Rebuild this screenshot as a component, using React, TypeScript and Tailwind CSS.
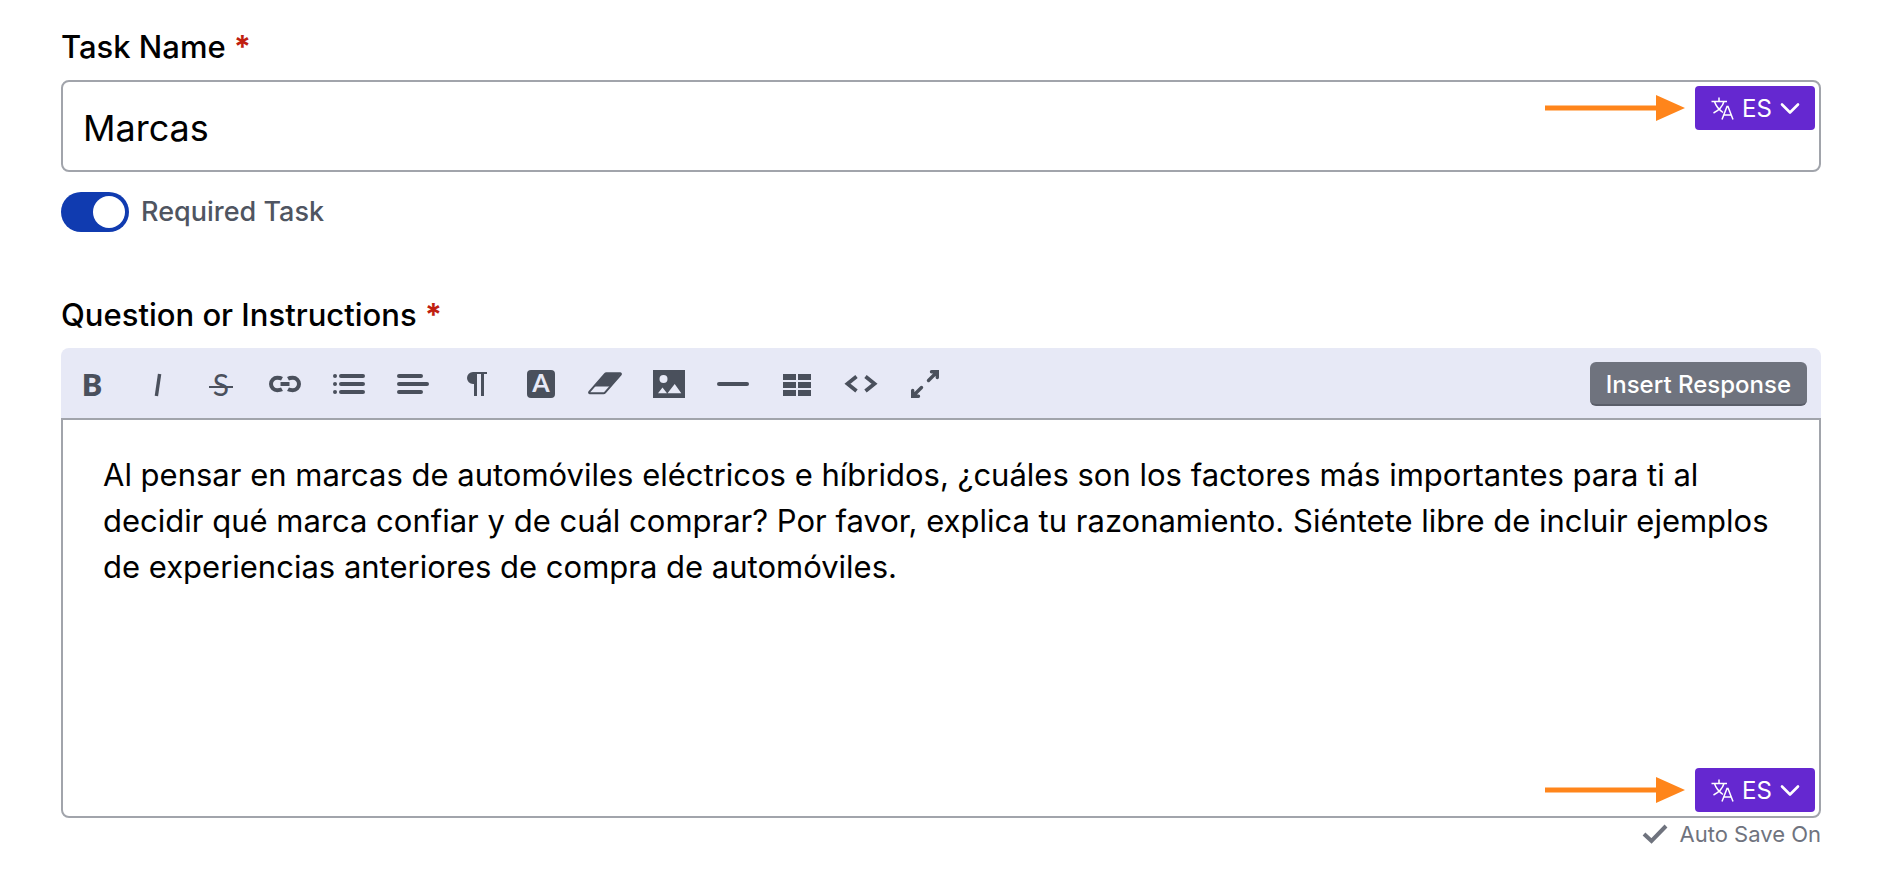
import React, { useState } from "react";

const BODY_TEXT =
  "Al pensar en marcas de automóviles eléctricos e híbridos, ¿cuáles son los factores más importantes para ti al decidir qué marca confiar y de cuál comprar? Por favor, explica tu razonamiento. Siéntete libre de incluir ejemplos de experiencias anteriores de compra de automóviles.";

const TOOLS: { name: string; icon: React.ReactNode }[] = [
  {
    name: "Bold",
    icon: (
      <text x="15" y="28" textAnchor="middle" fill="currentColor" stroke="none" className="font-['Lato'] text-[30px] font-extrabold">
        B
      </text>
    ),
  },
  { name: "Italic", icon: <path d="M18.6 6 15.4 28" strokeWidth="3.4" /> },
  {
    name: "Strikethrough",
    icon: (
      <>
        <text x="16" y="28" textAnchor="middle" fill="currentColor" stroke="none" className="font-['Lato'] text-[30px]">
          S
        </text>
        <path d="M4 19h24" strokeWidth="2" />
      </>
    ),
  },
  {
    name: "Link",
    icon: (
      <g strokeWidth="4">
        <path d="M13 10.7c-1.5-.8-3-.9-4.8-.9a6.2 6.2 0 0 0 0 12.4c1.8 0 3.3-.1 4.8-.9" />
        <path d="M19 10.7c1.5-.8 3-.9 4.8-.9a6.2 6.2 0 0 1 0 12.4c-1.8 0-3.3-.1-4.8-.9" />
        <path d="M11.5 16h9" />
      </g>
    ),
  },
  {
    name: "List",
    icon: <path d="M8 8h22M8 16h22M8 24h22M2 8h.01M2 16h.01M2 24h.01" strokeWidth="4" strokeLinecap="round" />,
  },
  {
    name: "Align",
    icon: <path d="M2 8h22M2 16h28M2 24h22" strokeWidth="4" strokeLinecap="round" />,
  },
  {
    name: "Paragraph",
    icon: <path d="M26 4H12a6 6 0 0 0 0 12h1v12h3V6h4v22h3V6h3z" fill="currentColor" stroke="none" />,
  },
  {
    name: "Text color",
    icon: (
      <>
        <rect x="2" y="2" width="28" height="28" rx="4" fill="currentColor" stroke="none" />
        <text x="16" y="24" textAnchor="middle" stroke="none" className="fill-[#e7e9f6] font-['Lato'] text-[25px] font-bold">
          A
        </text>
      </>
    ),
  },
  {
    name: "Clear formatting",
    icon: (
      <>
        <path d="M17.4 5.2H31a.9.9 0 0 1 .7 1.5L16 24.6a2 2 0 0 1-1.5.7H1a.9.9 0 0 1-.7-1.5L16 5.9a2 2 0 0 1 1.4-.7z" strokeWidth="2" />
        <path d="M17 5h15L21.5 18.5H5z" fill="currentColor" stroke="none" />
      </>
    ),
  },
  {
    name: "Image",
    icon: (
      <>
        <path d="M0 2h32v28H0z" fill="currentColor" stroke="none" />
        <g className="fill-[#e7e9f6]" stroke="none">
          <circle cx="10.5" cy="11" r="4" />
          <path d="M5 25.3 9.5 19.5 14 25.3zM14.5 25.3 21.7 16 28.3 25.3z" />
        </g>
      </>
    ),
  },
  { name: "Line", icon: <path d="M2 16h28" strokeWidth="4" strokeLinecap="round" /> },
  {
    name: "Table",
    icon: (
      <path
        d="M2 6h13v6H2zM17 6h13v6H17zM2 14h13v6H2zM17 14h13v6H17zM2 22h13v6H2zM17 22h13v6H17z"
        fill="currentColor"
        stroke="none"
      />
    ),
  },
  {
    name: "HTML",
    icon: <path d="M11.5 8.5 2.5 15.7l9 7.2M20.5 8.5l9 7.2-9 7.2" strokeWidth="3.8" />,
  },
  {
    name: "Fullscreen",
    icon: (
      <path
        d="M19.5 12.5 28 4M22.5 3.7h5.800v5.800M12.5 19.5 4 28M9.5 28.3H3.7v-5.800"
        strokeWidth="3.4"
        strokeLinecap="round"
      />
    ),
  },
];

const FieldLabel: React.FC<{ htmlFor: string; children: React.ReactNode }> = ({ htmlFor, children }) => (
  <label htmlFor={htmlFor} className="flex gap-2 text-[31px] leading-[38px] font-medium">
    {children}
    <span className="font-bold text-[#c01f10]">*</span>
  </label>
);

const LanguagePicker: React.FC = () => (
  <div className="flex items-center gap-2.5">
    <svg width="140" height="26" viewBox="0 0 140 26" className="fill-[#ff851b]" aria-hidden="true">
      <path d="M0 10.5h111V0l29 13-29 13V15.5H0z" />
    </svg>
    <button
      type="button"
      aria-haspopup="listbox"
      className="flex h-11 w-30 items-center justify-center gap-2 rounded-sm bg-[#6528d0] pt-0.5 text-2xl text-white"
    >
      <svg width="24" height="24" viewBox="0 0 24 24" fill="none" stroke="currentColor" strokeWidth="1.5" aria-hidden="true">
        <path d="M1.5 4.500h15.500M9 .5v4M4.500 4.500c1.500 5 5 8.500 8.500 11M14 4.500C12.500 9.500 8.500 13.500 3.500 16" />
        <path d="m12 22.500 5-13h1l5 13M13.800 18h7.600" />
      </svg>
      ES
      <svg
        width="20"
        height="20"
        viewBox="0 0 20 20"
        fill="none"
        stroke="currentColor"
        strokeWidth="2.6"
        strokeLinecap="round"
        strokeLinejoin="round"
        aria-hidden="true"
      >
        <path d="m2 5.5 8 8 8-8" />
      </svg>
    </button>
  </div>
);

const App: React.FC = () => {
  const [name, setName] = useState("Marcas");
  const [required, setRequired] = useState(true);
  const [body, setBody] = useState(BODY_TEXT);

  return (
    <main className="bg-white pt-7 pr-[65px] pb-8 pl-[61px] font-['Inter',sans-serif] text-black">
      <FieldLabel htmlFor="task-name">Task Name</FieldLabel>
      <div className="relative mt-3.5">
        <input
          id="task-name"
          value={name}
          onChange={(e) => setName(e.target.value)}
          className="block h-23 w-full rounded-lg border-2 border-[#a1a4ab] px-5 pt-1 text-4xl"
        />
        <div className="absolute top-1.5 right-1.5">
          <LanguagePicker />
        </div>
      </div>

      <label className="mt-5 flex w-fit items-center gap-3 text-[27px] leading-10 font-medium text-[#4f5561]">
        <input
          type="checkbox"
          role="switch"
          checked={required}
          onChange={(e) => setRequired(e.target.checked)}
          className="h-10 w-17 appearance-none rounded-full bg-gray-400 p-1 before:block before:size-8 before:rounded-full before:bg-white checked:bg-[#103bb0] checked:before:translate-x-7"
        />
        Required Task
      </label>

      <section className="mt-16">
        <FieldLabel htmlFor="instructions">Question or Instructions</FieldLabel>
        <div className="mt-3.5 flex h-[70px] items-center justify-between rounded-t-lg bg-[#e7e9f6] pt-0.5 pr-3.5">
          <div className="flex">
            {TOOLS.map((tool) => (
              <button
                key={tool.name}
                type="button"
                aria-label={tool.name}
                className="flex size-16 items-center justify-center text-[#4a505c]"
              >
                <svg width="32" height="32" viewBox="0 0 32 32" fill="none" stroke="currentColor" className="overflow-visible">
                  {tool.icon}
                </svg>
              </button>
            ))}
          </div>
          <button
            type="button"
            className="h-11 rounded-md border-b-2 border-[#5a5e69] bg-[#6f737e] px-4 pt-1 text-2xl font-medium text-white"
          >
            Insert Response
          </button>
        </div>
        <div className="relative">
          <textarea
            id="instructions"
            value={body}
            onChange={(e) => setBody(e.target.value)}
            className="block h-100 w-full resize-none rounded-b-lg border-2 border-[#a1a4ab] px-10 py-8 text-[31px] leading-[46px]"
          />
          <div className="absolute right-1.5 bottom-1.5">
            <LanguagePicker />
          </div>
        </div>
        <p className="flex items-center justify-end gap-3 text-[22px] leading-8 text-[#6f737e]">
          <svg width="26" height="20" viewBox="0 0 26 20" fill="none" stroke="currentColor" strokeWidth="4" aria-hidden="true">
            <path d="m2 10 7.5 7L24 2" />
          </svg>
          Auto Save On
        </p>
      </section>
    </main>
  );
};

export default App;
